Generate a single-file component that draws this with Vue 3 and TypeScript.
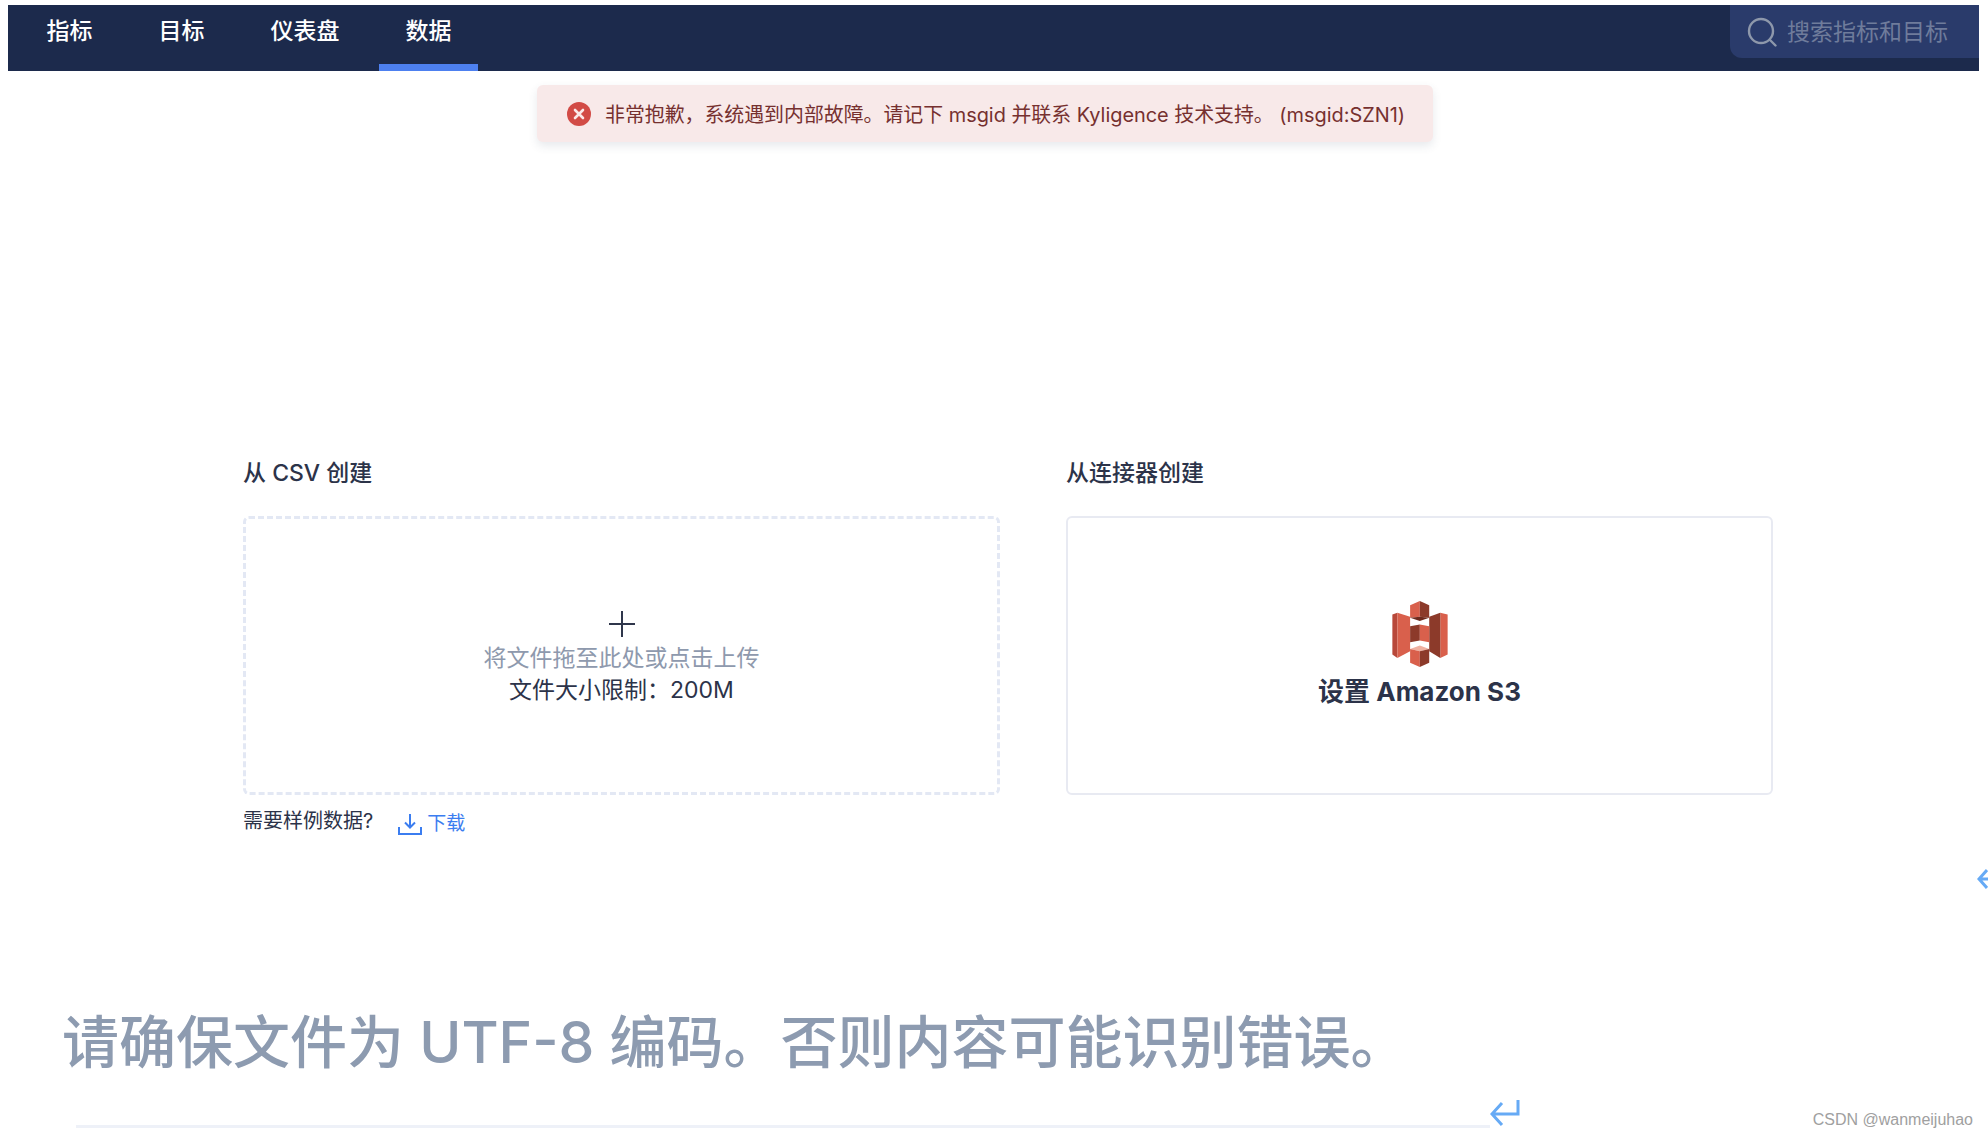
<script setup lang="ts">
const tabs = [
  { label: '指标', active: false },
  { label: '目标', active: false },
  { label: '仪表盘', active: false },
  { label: '数据', active: true },
]
</script>

<template>
  <div class="page">
    <header class="nav">
      <nav class="tabs">
        <a v-for="tab in tabs" :key="tab.label" class="tab" :class="{ active: tab.active }">{{ tab.label }}</a>
      </nav>
      <div class="search">
        <svg class="search-icon" viewBox="0 0 30 30" fill="none" stroke="#8e98ab" stroke-width="2.4" stroke-linecap="round">
          <circle cx="14" cy="14" r="12" />
          <path d="M23 23l5.5 5.5" />
        </svg>
        <span class="placeholder">搜索指标和目标</span>
      </div>
    </header>

    <div class="toast">
      <svg class="toast-icon" viewBox="0 0 24 24">
        <circle cx="12" cy="12" r="12" fill="#d24b46" />
        <path d="M8 8l8 8M16 8l-8 8" stroke="#fbeaea" stroke-width="2.6" stroke-linecap="round" />
      </svg>
      <span>非常抱歉，系统遇到内部故障。请记下 msgid 并联系 Kyligence 技术支持。 (msgid:SZN1)</span>
    </div>

    <main class="sources">
      <section class="source csv">
        <h2>从 CSV 创建</h2>
        <div class="dropzone">
          <svg class="plus" viewBox="0 0 26 26" stroke="#2f364b" stroke-width="2">
            <path d="M0 13h26M13 0v26" />
          </svg>
          <p class="hint">将文件拖至此处或点击上传</p>
          <p class="limit">文件大小限制：200M</p>
        </div>
        <div class="sample">
          <span>需要样例数据?</span>
          <a class="download">
            <svg viewBox="0 0 24 22" fill="none" stroke="#3b7df0" stroke-width="2">
              <path d="M12 1v13M7 9.5l5 5 5-5M1 14v7h22v-7" />
            </svg>
            下载
          </a>
        </div>
      </section>
      <section class="source connector">
        <h2>从连接器创建</h2>
        <div class="card">
          <svg class="s3" viewBox="0 0 165 197">
            <!-- wings -->
            <polygon points="0,40 15,35 15,170 0,160" fill="#b8483a" />
            <polygon points="15,35 53,47 53,150 15,170" fill="#d9604c" />
            <polygon points="165,40 143,35 143,170 165,160" fill="#d9604c" />
            <polygon points="110,47 143,35 143,170 110,150" fill="#8c3a2a" />
            <!-- top block -->
            <polygon points="53,13 82,0 82,47 53,50" fill="#d9604c" />
            <polygon points="110,13 82,0 82,47 110,50" fill="#8c3a2a" />
            <polygon points="53,50 82,47 110,50 82,60" fill="#6f2a1e" />
            <!-- middle block -->
            <polygon points="53,75 82,70 82,118 53,123" fill="#8c3a2a" />
            <polygon points="110,75 82,70 82,118 110,123" fill="#d9604c" />
            <!-- bottom block -->
            <polygon points="53,143 82,133 110,143 82,150" fill="#efb0a0" />
            <polygon points="53,143 82,150 82,197 53,184" fill="#d9604c" />
            <polygon points="110,143 82,150 82,197 110,184" fill="#8c3a2a" />
          </svg>
          <span class="card-label">设置 Amazon S3</span>
        </div>
      </section>
    </main>

    <div class="notice">
      <p class="notice-text">请确保文件为 UTF-8 编码。否则内容可能识别错误。</p>
      <div class="notice-rule">
        <span class="rule"></span>
        <svg class="return" viewBox="0 0 30 28" fill="none" stroke="#66aaf5" stroke-width="3">
          <path d="M28 0v14H3M12 3L2 14l10 11" />
        </svg>
      </div>
    </div>

    <svg class="edge-arrow" viewBox="0 0 11 20" fill="none" stroke="#66aaf5" stroke-width="3">
      <path d="M10 1L2 10l8 9M3 10h8" />
    </svg>
    <span class="watermark">CSDN @wanmeijuhao</span>
  </div>
</template>

<style>
html,
body {
  background: #fff;
}
</style>

<style scoped>
.page {
  position: relative;
  width: 1988px;
  height: 1138px;
  overflow: hidden;
  padding: 5px 9px 0 8px;
  box-sizing: border-box;
  background: #fff;
  font-family: Inter, "Noto Sans CJK SC", sans-serif;
  color: #2c3349;
}

.nav {
  display: flex;
  justify-content: space-between;
  height: 66px;
  background: #1c2a4c;
}

.tabs {
  display: flex;
  gap: 13px;
  padding-left: 12px;
}

.tab {
  box-sizing: border-box;
  height: 66px;
  padding: 8px 26.5px 0;
  font-size: 23px;
  font-weight: 500;
  line-height: 36px;
  color: #fff;
}

.tab.active {
  border-bottom: 7px solid #4d80f0;
}

.search {
  display: flex;
  align-items: flex-start;
  gap: 10px;
  box-sizing: border-box;
  width: 249px;
  height: 53px;
  padding: 12px 0 0 17px;
  background: #2a3b6b;
  border-radius: 0 0 0 12px;
}

.search-icon {
  width: 30px;
  height: 30px;
}

.placeholder {
  font-size: 23px;
  line-height: 30px;
  color: #6f7c9b;
}

.toast {
  position: absolute;
  top: 85px;
  left: 537px;
  display: flex;
  align-items: center;
  gap: 14px;
  box-sizing: border-box;
  width: 896px;
  height: 57px;
  padding-left: 30px;
  background: #f8e9e9;
  border-radius: 6px;
  box-shadow: 0 4px 10px rgba(60, 70, 100, 0.12);
  font-size: 19.9px;
  color: #76302f;
  white-space: nowrap;
}

.toast-icon {
  width: 24px;
  height: 24px;
}

.sources {
  display: flex;
  gap: 66px;
  padding: 385px 0 0 235px;
}

.source h2 {
  margin: 0 0 26px;
  font-size: 23px;
  font-weight: 500;
  line-height: 34px;
}

.csv {
  width: 757px;
}

.connector {
  width: 707px;
}

.dropzone,
.card {
  display: flex;
  flex-direction: column;
  align-items: center;
  box-sizing: border-box;
  height: 279px;
  border-radius: 6px;
}

.dropzone {
  padding-top: 92px;
  border: 3px dashed #e3e8f4;
}

.card {
  padding-top: 83px;
  border: 2px solid #e8eaf2;
}

.plus {
  width: 26px;
  height: 26px;
  margin-bottom: 5px;
}

.hint,
.limit {
  margin: 0;
  font-size: 23px;
  line-height: 32px;
}

.hint {
  color: #8e99ad;
}

.s3 {
  width: 56px;
  height: 66px;
}

.card-label {
  margin-top: 8px;
  font-size: 26px;
  font-weight: 700;
  line-height: 34px;
}

.sample {
  display: flex;
  align-items: center;
  gap: 25px;
  height: 30px;
  margin-top: 11px;
  font-size: 20px;
  line-height: 30px;
}

.download {
  display: flex;
  align-items: center;
  gap: 5px;
  margin-top: 5px;
  color: #3b7df0;
  font-size: 19px;
}

.download svg {
  width: 24px;
  height: 22px;
}

.notice {
  padding: 169px 0 0 54px;
}

.notice-text {
  margin: 0;
  font-size: 57px;
  font-weight: 500;
  line-height: 76px;
  color: #8d9bb0;
  white-space: nowrap;
  filter: blur(0.7px);
}

.notice-rule {
  display: flex;
  align-items: flex-end;
  margin: 19px 0 0 14px;
}

.rule {
  width: 1414px;
  height: 3px;
  background: #eef1f8;
}

.return {
  width: 30px;
  height: 28px;
}

.edge-arrow {
  position: absolute;
  top: 869px;
  right: 0;
  width: 11px;
  height: 20px;
}

.watermark {
  position: absolute;
  top: 1110px;
  right: 15px;
  font-family: "Liberation Sans", sans-serif;
  font-size: 16px;
  line-height: 20px;
  color: #a0a0a0;
}
</style>
